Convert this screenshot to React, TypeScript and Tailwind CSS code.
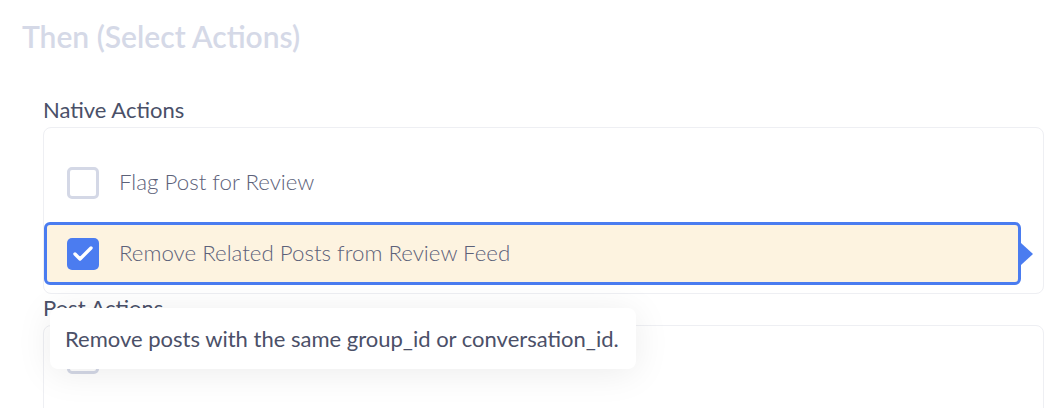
import { Check } from "lucide-react";

const FONT = { fontFamily: "Lato, 'Noto Sans', sans-serif" };

interface Action {
  label: string;
  checked?: boolean;
  active?: boolean;
}

const native: Action[] = [
  { label: "Hide Post" },
  { label: "Flag Post for Review" },
  { label: "Remove Related Posts from Review Feed", checked: true, active: true },
];

const post: Action[] = [{ label: "Send to Webhook" }, { label: "Add Tag" }];

function Box({ checked }: { checked?: boolean }) {
  if (checked) {
    return (
      <span className="flex h-8 w-8 shrink-0 items-center justify-center rounded-[5px] bg-[#4b7cf0]">
        <Check className="h-6 w-6 text-white" strokeWidth={3.4} />
      </span>
    );
  }
  return <span className="h-8 w-8 shrink-0 rounded-[5px] border-[3px] border-[#d4d8e6] bg-white" />;
}

function Row({ a }: { a: Action }) {
  return (
    <div
      className={`relative mr-[22px] flex h-[63px] shrink-0 items-center gap-5 rounded-md border-[3px] pl-5 ${
        a.active ? "border-[#4a7cf0] bg-[#fdf3e0]" : "border-transparent"
      }`}
    >
      <Box checked={a.checked} />
      <span className="-mt-0.5 text-[22.3px] font-light text-[#5c6179]">{a.label}</span>
      {a.active && (
        <span className="absolute -right-[15px] top-1/2 h-0 w-0 -translate-y-1/2 border-y-[11px] border-l-[12px] border-y-transparent border-l-[#4a7cf0]" />
      )}
    </div>
  );
}

export default function App() {
  return (
    <div className="relative h-[408px] overflow-hidden bg-white" style={FONT}>
      <h2 className="pl-[22px] pt-[18px] text-[30px] font-semibold leading-9 text-[#d5d9e7]">Then (Select Actions)</h2>
      <div className="mt-[42px] pl-[43px] pr-4">
        <div className="text-[22px] leading-7 text-[#4a5068]">Native Actions</div>
        <div className="mt-[3px] h-[167px] overflow-hidden rounded-lg border border-[#eeeff3]">
          <div className="-mt-[48px] flex flex-col gap-2">
            {native.map((a) => (
              <Row key={a.label} a={a} />
            ))}
          </div>
        </div>
        <div className="text-[22px] leading-7 text-[#4a5068]">Post Actions</div>
        <div className="mt-[3px] h-[200px] overflow-hidden rounded-lg border border-[#eeeff3]">
          <div className="flex flex-col gap-2">
            {post.map((a) => (
              <Row key={a.label} a={a} />
            ))}
          </div>
        </div>
      </div>
      <div className="absolute left-[50px] top-[308px] flex h-[61px] w-[586px] items-center rounded-lg bg-white px-[15px] shadow-[0_4px_36px_rgba(0,0,0,0.08)]">
        <span className="text-[22px] text-[#4b5068]">Remove posts with the same group_id or conversation_id.</span>
      </div>
    </div>
  );
}
